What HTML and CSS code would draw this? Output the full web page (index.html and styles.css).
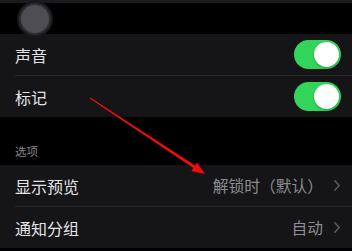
FILE: index.html
```html
<!DOCTYPE html>
<html lang="zh">
<head>
<meta charset="utf-8">
<link rel="stylesheet" href="styles.css">
</head>
<body>
<div class="page">
  <div class="topbar"></div>
  <div class="avatar-area"><div class="avatar"></div></div>
  <div class="group">
    <div class="row">
      <span class="label">声音</span>
      <span class="toggle"><span class="knob"></span></span>
    </div>
    <div class="sep"></div>
    <div class="row">
      <span class="label">标记</span>
      <span class="toggle"><span class="knob"></span></span>
    </div>
  </div>
  <div class="section-header">选项</div>
  <div class="group">
    <div class="row">
      <span class="label">显示预览</span>
      <span class="value">解锁时（默认）<svg class="chev" width="6" height="11" viewBox="0 0 6 11"><path d="M0.8 0.8 L5.2 5.5 L0.8 10.2" fill="none" stroke="#5c5c60" stroke-width="1.5" stroke-linecap="round" stroke-linejoin="round"/></svg></span>
    </div>
    <div class="sep"></div>
    <div class="row">
      <span class="label">通知分组</span>
      <span class="value">自动<svg class="chev" width="6" height="11" viewBox="0 0 6 11"><path d="M0.8 0.8 L5.2 5.5 L0.8 10.2" fill="none" stroke="#5c5c60" stroke-width="1.5" stroke-linecap="round" stroke-linejoin="round"/></svg></span>
    </div>
  </div>
  <svg class="arrow" width="352" height="251" viewBox="0 0 352 251">
    <polygon points="89.7,98.4 90.3,97.6 195.8,166.1 194.2,168.6" fill="#f20c0c"/>
    <polygon points="205,174 191.4,171.0 197.0,162.6" fill="#f20c0c"/>
  </svg>
</div>
</body>
</html>
```

FILE: styles.css
```css
* { box-sizing: border-box; }
html, body {
  margin: 0;
  padding: 0;
  background: #000;
}
body {
  font-family: "Noto Sans CJK SC", "Noto Sans", sans-serif;
  width: 352px;
  height: 251px;
  overflow: hidden;
}
.page {
  position: relative;
  width: 352px;
  height: 251px;
  background: #000;
}
.topbar {
  height: 3px;
  background: #1b1a1e;
}
.avatar-area {
  height: 31px;
  display: flex;
  align-items: center;
  padding-left: 21px;
}
.avatar {
  width: 28px;
  height: 28px;
  border-radius: 50%;
  background: #4e4d51;
  box-shadow: 0 0 0 2px #2e2d31, 0 0 0 4px #19181b;
}
.group {
  background: #151417;
}
.row {
  height: 41px;
  display: flex;
  align-items: center;
  justify-content: space-between;
  padding-left: 15px;
  padding-right: 11px;
}
.sep {
  height: 1px;
  margin-left: 15px;
  background: #29282c;
}
.label {
  font-size: 16px;
  color: #e4e4e6;
}
.toggle {
  width: 47px;
  height: 29px;
  border-radius: 15px;
  background: #32d45a;
  display: flex;
  align-items: center;
  justify-content: flex-end;
  padding-right: 2px;
}
.knob {
  width: 25px;
  height: 25px;
  border-radius: 50%;
  background: #fff;
  box-shadow: 0 1px 2px rgba(0,0,0,0.25);
}
.value {
  display: flex;
  align-items: center;
  gap: 11px;
  font-size: 15.75px;
  color: #8c8c91;
  padding-right: 1px;
}
.chev { display: block; }
.section-header {
  height: 48px;
  display: flex;
  align-items: flex-end;
  padding-left: 15px;
  padding-bottom: 6px;
  font-size: 11.5px;
  color: #87878c;
}
.arrow {
  position: absolute;
  left: 0;
  top: 0;
}
```
